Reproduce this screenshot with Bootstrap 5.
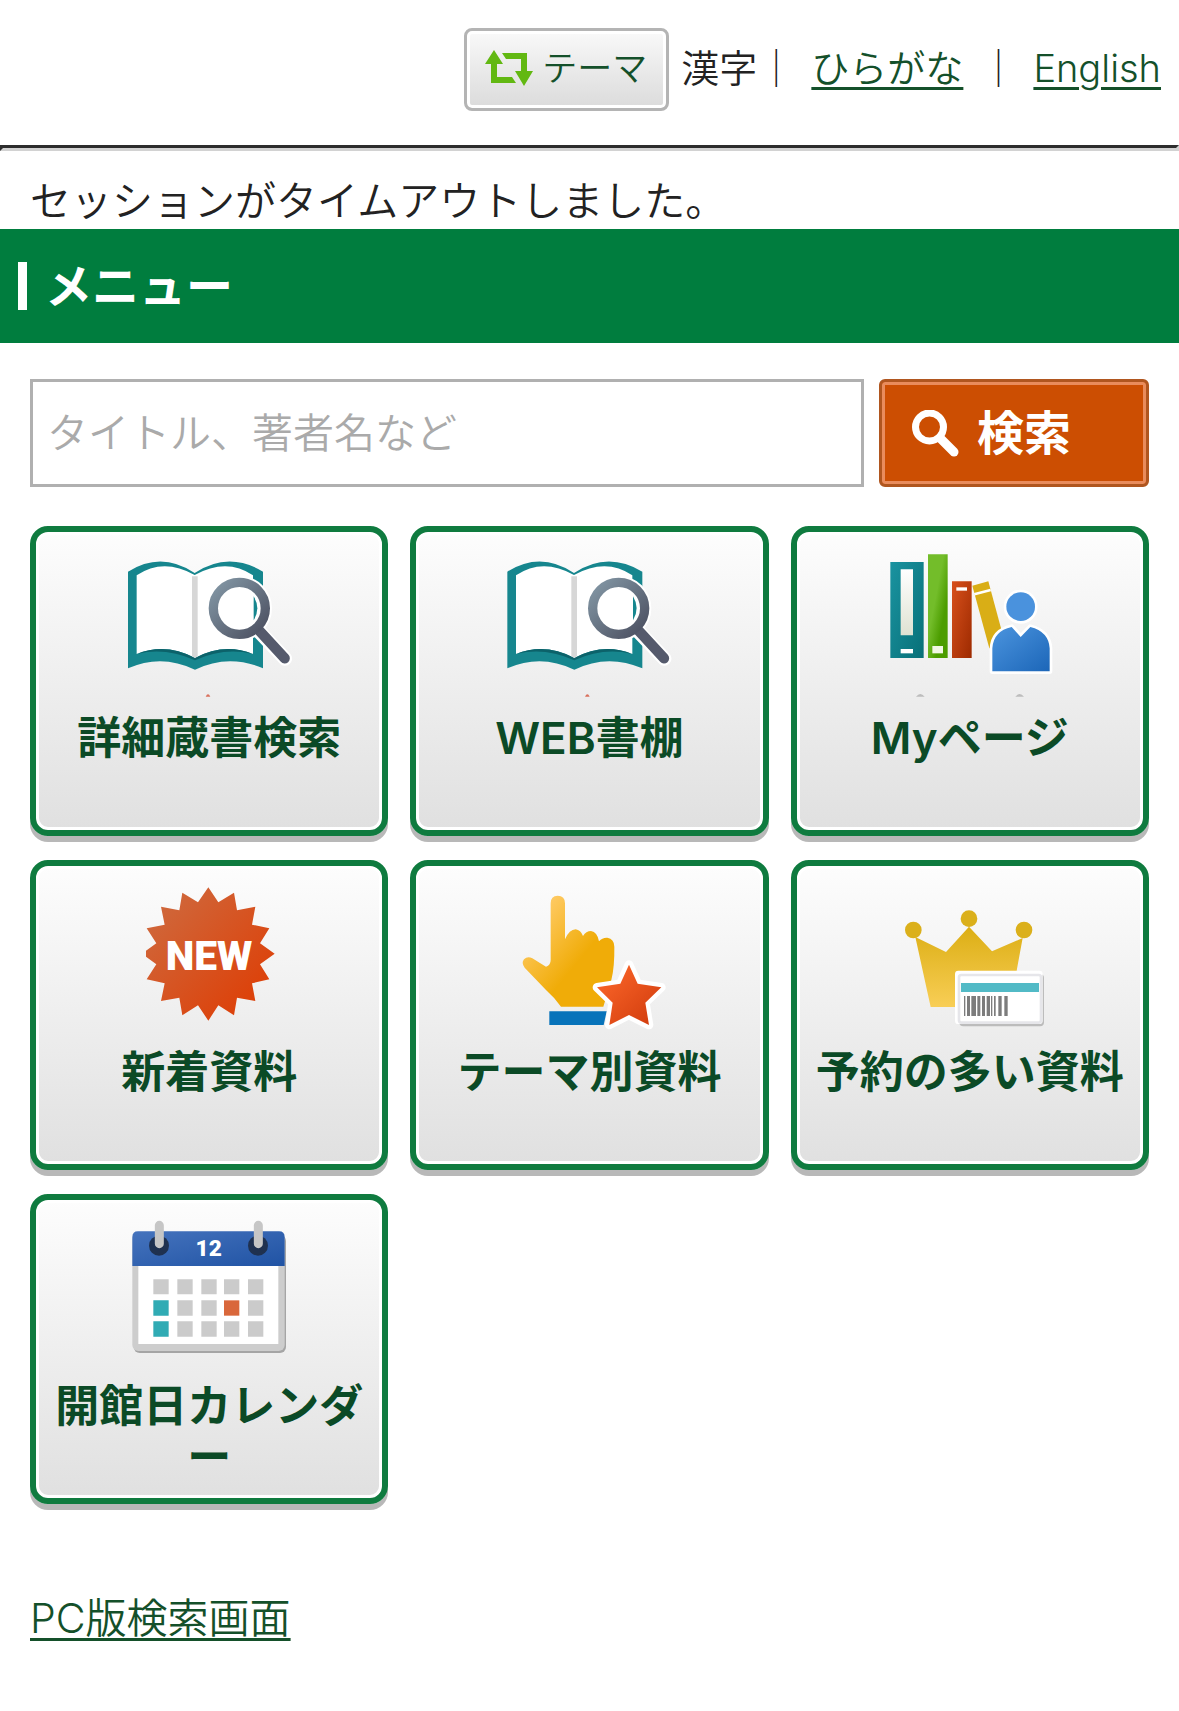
<!DOCTYPE html>
<html lang="ja">
<head>
<meta charset="utf-8">
<meta name="viewport" content="width=device-width, initial-scale=1">
<title>メニュー</title>
<link rel="stylesheet" href="https://cdn.jsdelivr.net/npm/bootstrap@5.3.0/dist/css/bootstrap.min.css">
<style>
  body { font-family: Inter, "Noto Sans CJK JP", sans-serif; font-size: 41px; line-height: 56px; color: #222; background: #fff; font-weight: 350; }
  a { color: #14502a; text-decoration-thickness: 3px; text-underline-offset: 5px; }
  .site-header { padding: 28px 18px 34px; font-size: 38px; gap: 12px; }
  .theme-btn { height: 83px; padding: 0 19px 4px 18px; gap: 9px; border: 3px solid #b4b4b4; border-radius: 8px; font-size: 35px; font-weight: 350; color: #14502a;
    background: linear-gradient(#f9f9f9, #dbdbdb); box-shadow: inset 0 0 0 3px #fff; }
  .langs { gap: 16px; padding-bottom: 4px; }
  .rule { height: 6px; margin: 0; opacity: 1; border: 3px solid #2d2d2d; border-right-color: #d2d2d2; border-bottom-color: #d2d2d2; }
  .notice { padding: 22px 30px 0; margin: 0; }
  .band { background: #007d3e; color: #fff; padding: 29px 18px; gap: 18px; }
  .band::before { content: ""; width: 9px; height: 48px; background: #fff; }
  .band h1 { font-size: 47px; line-height: 56px; font-weight: 700; margin: 0; }
  .page { padding: 36px 30px 0; }
  .finder { gap: 15px; margin-bottom: 39px; }
  .finder .form-control { height: 108px; border: 3px solid #b0b0b0; border-radius: 0; font-size: 41px; font-weight: 350; padding: 0 14px; }
  .finder .form-control::placeholder { color: #aaa; }
  .find-btn { width: 270px; height: 108px; border: 3px solid #b0561f; border-radius: 6px; background: #cc4e02; box-shadow: inset 0 0 0 3px #e98c5c; color: #fff; font-size: 47px; font-weight: 700; padding: 0 30px; gap: 18px; }
  .find-btn:hover { background: #cc4e02; color: #fff; }
  .tiles { --bs-gutter-x: 22px; --bs-gutter-y: 24px; }
  .tile { min-height: 310px; padding: 13px 8px; border: 6px solid #0f7b3f; border-radius: 18px; text-decoration: none; text-align: center;
    font-size: 44px; line-height: 51px; font-weight: 600; color: #0b4a26;
    background: linear-gradient(#fdfdfd, #e0e0e0); box-shadow: inset 0 0 0 3px #fff, 0 6px 0 #b8b8b8; }
  .tile svg { width: 190px; height: 152px; margin-bottom: 16px; }
  .tile span { word-break: break-all; line-break: anywhere; }
  .svg-label { font-family: Roboto, "Liberation Sans", sans-serif; font-weight: 900; fill: #fff; text-anchor: middle; }
  .foot { padding: 86px 30px 40px; }
</style>
</head>
<body>
<svg width="0" height="0" class="position-absolute" aria-hidden="true">
  <defs>
    <linearGradient id="gLens" x1="0" y1="0" x2="1" y2="1"><stop offset="0" stop-color="#8397a5"/><stop offset="1" stop-color="#4b4f60"/></linearGradient>
    <linearGradient id="gTeal" x1="0" y1="0" x2="1" y2="1"><stop offset="0" stop-color="#1a93a0"/><stop offset="1" stop-color="#087078"/></linearGradient>
    <linearGradient id="gGreen" x1="0" y1="0" x2="1" y2="1"><stop offset=".4" stop-color="#73bd2a"/><stop offset=".7" stop-color="#4c9d00"/></linearGradient>
    <linearGradient id="gRed" x1="0" y1="0" x2="1" y2="1"><stop offset="0" stop-color="#d8501c"/><stop offset="1" stop-color="#9d2a00"/></linearGradient>
    <linearGradient id="gBlue" x1="0" y1="0" x2="1" y2="1"><stop offset="0" stop-color="#4b94de"/><stop offset="1" stop-color="#1c66b8"/></linearGradient>
    <linearGradient id="gNew" x1="0" y1="0" x2="1" y2="1"><stop offset=".1" stop-color="#cf683c"/><stop offset=".8" stop-color="#dc430c"/></linearGradient>
    <linearGradient id="gHand" x1="0" y1="0" x2="1" y2="1"><stop offset=".15" stop-color="#ffcb66"/><stop offset=".6" stop-color="#f0ac08"/></linearGradient>
    <linearGradient id="gStar" x1="0" y1="0" x2="1" y2="1"><stop offset="0" stop-color="#ff6a2c"/><stop offset="1" stop-color="#cf3a0c"/></linearGradient>
    <linearGradient id="gCrown" x1="0" y1="0" x2="0" y2="1"><stop offset="0" stop-color="#dcae14"/><stop offset="1" stop-color="#f8ce56"/></linearGradient>
    <linearGradient id="gCal" x1="0" y1="0" x2="1" y2="1"><stop offset="0" stop-color="#4573bd"/><stop offset="1" stop-color="#2053a4"/></linearGradient>
    <linearGradient id="gLabel" x1="0" y1="0" x2="0" y2="1"><stop offset="0" stop-color="#fff"/><stop offset="1" stop-color="#dfe2d2"/></linearGradient>
    <g id="bookSearch">
      <path d="M324 170Q424 107 524 174Q625 107 729 170V460Q625 415 525 464Q424 415 324 460Z" fill="#16868e"/>
      <path d="M350 181Q430 127 524 180Q620 127 699 181V417Q612 382 525 429Q437 382 350 417Z" fill="#fff"/>
      <path d="M350 417Q437 382 525 429Q612 382 699 417Q612 396 525 436Q437 396 350 417Z" fill="#0c626a"/>
      <path d="M516 184h17v240l-8 5-9-5z" fill="#d7d7d7"/>
      <path d="M716 348L795 431" stroke="#fff" stroke-width="43" stroke-linecap="round"/>
      <circle cx="658" cy="280" r="78" fill="#fff" stroke="#fff" stroke-width="40"/>
      <path d="M701 244Q723 280 701 316Z" fill="#16868e"/>
      <path d="M716 345L794 430" stroke="#555a6c" stroke-width="31" stroke-linecap="round"/>
      <circle cx="658" cy="280" r="78" fill="none" stroke="url(#gLens)" stroke-width="28"/>
      <path d="M557 545q7-14 14 0z" fill="#d9705c"/>
    </g>
  </defs>
</svg>

<header class="site-header d-flex justify-content-end align-items-center">
  <button type="button" class="theme-btn d-flex align-items-center">
    <svg width="48" height="36" viewBox="0 0 48 36" fill="#62b812" aria-hidden="true"><path d="M9 0L18 14H12V27H27L31 33H6V14H0Z"/><path d="M17 3H42V21H48L39 36L30 21H36V9H21Z"/></svg>
    テーマ
  </button>
  <nav class="langs d-flex" aria-label="言語">
    <span>漢字｜</span><a href="#">ひらがな</a><span>｜</span><a href="#">English</a>
  </nav>
</header>
<hr class="rule">
<main>
  <p class="notice">セッションがタイムアウトしました。</p>
  <div class="band d-flex align-items-center"><h1>メニュー</h1></div>
  <div class="page">
    <form class="finder d-flex">
      <input type="text" class="form-control flex-fill" placeholder="タイトル、著者名など" aria-label="タイトル、著者名など">
      <button type="button" class="find-btn btn d-flex align-items-center flex-shrink-0">
        <svg width="47" height="47" viewBox="0 0 47 47" fill="none" stroke="#fff" aria-hidden="true"><circle cx="17.500" cy="17" r="14" stroke-width="7"/><path d="M28 28L42 42" stroke-width="9" stroke-linecap="round"/></svg>
        検索
      </button>
    </form>

    <div class="tiles row row-cols-3">
      <div class="col"><a href="#" class="tile d-flex flex-column align-items-center">
        <svg viewBox="282 90 570 456" aria-hidden="true"><use href="#bookSearch"/></svg>
        <span>詳細蔵書検索</span></a></div>

      <div class="col"><a href="#" class="tile d-flex flex-column align-items-center">
        <svg viewBox="284 90 570 456" aria-hidden="true"><use href="#bookSearch"/></svg>
        <span>WEB書棚</span></a></div>

      <div class="col"><a href="#" class="tile d-flex flex-column align-items-center">
        <svg viewBox="285 90 570 456" aria-hidden="true">
          <path d="M331 141h100v288H331z" fill="url(#gTeal)"/><path d="M362 163h37v198h-37z" fill="url(#gLabel)"/><path d="M362 402h37v13h-37z" fill="#fff"/>
          <path d="M444 118h59v311h-59z" fill="url(#gGreen)"/><path d="M457 393h32v22h-32z" fill="#f2f7e4"/>
          <path d="M516 199h59v230h-59z" fill="url(#gRed)"/><path d="M529 217h32v10h-32z" fill="#fff"/>
          <path d="M577 212L625 199L678 395L628 400Z" fill="#d9ae16"/><path d="M583 238L632 225" stroke="#fff" stroke-width="8"/>
          <g stroke="#fff" stroke-width="16" stroke-linejoin="round"><circle cx="722" cy="275" r="43"/><path d="M637 469V400Q640 348 695 336L722 366L751 336Q806 350 809 400V469Z"/></g>
          <circle cx="722" cy="275" r="43" fill="#4a92dd"/><path d="M637 469V400Q640 348 695 336L722 366L751 336Q806 350 809 400V469Z" fill="url(#gBlue)"/>
          <path d="M408 545q13-16 26 0zM706 545q13-16 26 0z" fill="#bdbdbd"/>
        </svg>
        <span>Myページ</span></a></div>

      <div class="col"><a href="#" class="tile d-flex flex-column align-items-center">
        <svg viewBox="282 87 570 456" aria-hidden="true">
          <path fill="url(#gNew)" d="M565 112L595 157L642 128L651 181L706 170L696 224L748 235L720 280L764 311L720 343L748 388L696 400L706 453L651 443L642 496L595 466L565 512L534 466L487 496L478 443L423 453L434 400L380 388L409 343L378 320V302L409 280L380 235L434 224L423 170L478 181L487 128L534 157Z"/>
          <text class="svg-label" x="567" y="361" font-size="122">NEW</text>
        </svg>
        <span>新着資料</span></a></div>

      <div class="col"><a href="#" class="tile d-flex flex-column align-items-center">
        <svg viewBox="284 87 570 456" aria-hidden="true">
          <path fill="url(#gHand)" d="M454 160Q454 137 475 137Q497 137 497 160V268Q510 238 529 238Q544 240 551 258Q560 243 575 243Q594 246 599 274Q609 262 624 263Q645 267 645 290Q646 350 636 390L612 470H485Q467 444 440 420L376 353Q365 339 374 328Q384 318 399 325L440 350Q454 346 454 330Z"/>
          <path fill="#0873ba" d="M450 484h172l-9 41H450z"/>
          <path d="M689 344L715 401L786 412L738 458L749 525L689 495L630 525L640 458L593 412L663 401Z" stroke="#fff" stroke-width="26" stroke-linejoin="round"/>
          <path d="M689 344L715 401L786 412L738 458L749 525L689 495L630 525L640 458L593 412L663 401Z" fill="url(#gStar)"/>
        </svg>
        <span>テーマ別資料</span></a></div>

      <div class="col"><a href="#" class="tile d-flex flex-column align-items-center">
        <svg viewBox="285 87 570 456" aria-hidden="true">
          <g fill="#dbb01b"><circle cx="400" cy="240" r="25"/><circle cx="567" cy="206" r="25"/><circle cx="732" cy="240" r="25"/></g>
          <path fill="url(#gCrown)" d="M406 261L498 306L567 230L636 304L728 264L690 471H452Z"/>
          <rect x="538" y="372" width="254" height="157" rx="12" fill="#bcbcbc"/>
          <rect x="525" y="362" width="263" height="160" rx="10" fill="#fff"/>
          <rect x="537" y="375" width="246" height="143" rx="7" fill="#fff" stroke="#e6e6ea" stroke-width="8"/>
          <path fill="#52bac6" d="M543 399h234v27H543z"/>
          <path fill="#7c7c7c" d="M552 438h4v60h-4zM561 438h9v60h-9zM574 438h14v60h-14zM592 438h9v60h-9zM606 438h9v60h-9zM620 438h10v60h-10zM633 438h4v60h-4zM642 438h5v60h-5zM655 438h10v60h-10zM673 438h10v60h-10z"/>
        </svg>
        <span>予約の多い資料</span></a></div>

      <div class="col"><a href="#" class="tile d-flex flex-column align-items-center">
        <svg viewBox="282 84 570 456" aria-hidden="true">
          <rect x="341" y="150" width="457" height="354" rx="18" fill="#a5a5a5"/>
          <rect x="337" y="145" width="457" height="353" rx="18" fill="#cdcdcd"/>
          <path fill="#fff" d="M355 240h420v237H355z"/>
          <path fill="url(#gCal)" d="M337 243V156Q337 139 354 139H777Q794 139 794 156V243Z"/>
          <g fill="#1f3150"><circle cx="417" cy="182" r="30"/><circle cx="714" cy="182" r="30"/></g>
          <path d="M418 121V176M715 121V176" stroke="#c6c6c6" stroke-width="27" stroke-linecap="round"/>
          <text class="svg-label" x="566" y="214" font-size="68">12</text>
          <path fill="#cbcbcb" d="M400 283h46v45h-46zM472 283h46v45h-46zM544 283h46v45h-46zM612 283h46v45h-46zM684 283h46v45h-46zM472 346h46v46h-46zM544 346h46v46h-46zM684 346h46v46h-46zM472 409h46v46h-46zM544 409h46v46h-46zM612 409h46v46h-46zM684 409h46v46h-46z"/>
          <path fill="#30abb4" d="M400 346h46v46h-46zM400 409h46v46h-46z"/><path fill="#d9673b" d="M612 346h46v46h-46z"/>
        </svg>
        <span>開館日カレンダー</span></a></div>
    </div>
  </div>
</main>
<footer class="foot"><a href="#">PC版検索画面</a></footer>
<script src="https://cdn.jsdelivr.net/npm/bootstrap@5.3.0/dist/js/bootstrap.bundle.min.js"></script>
</body>
</html>
